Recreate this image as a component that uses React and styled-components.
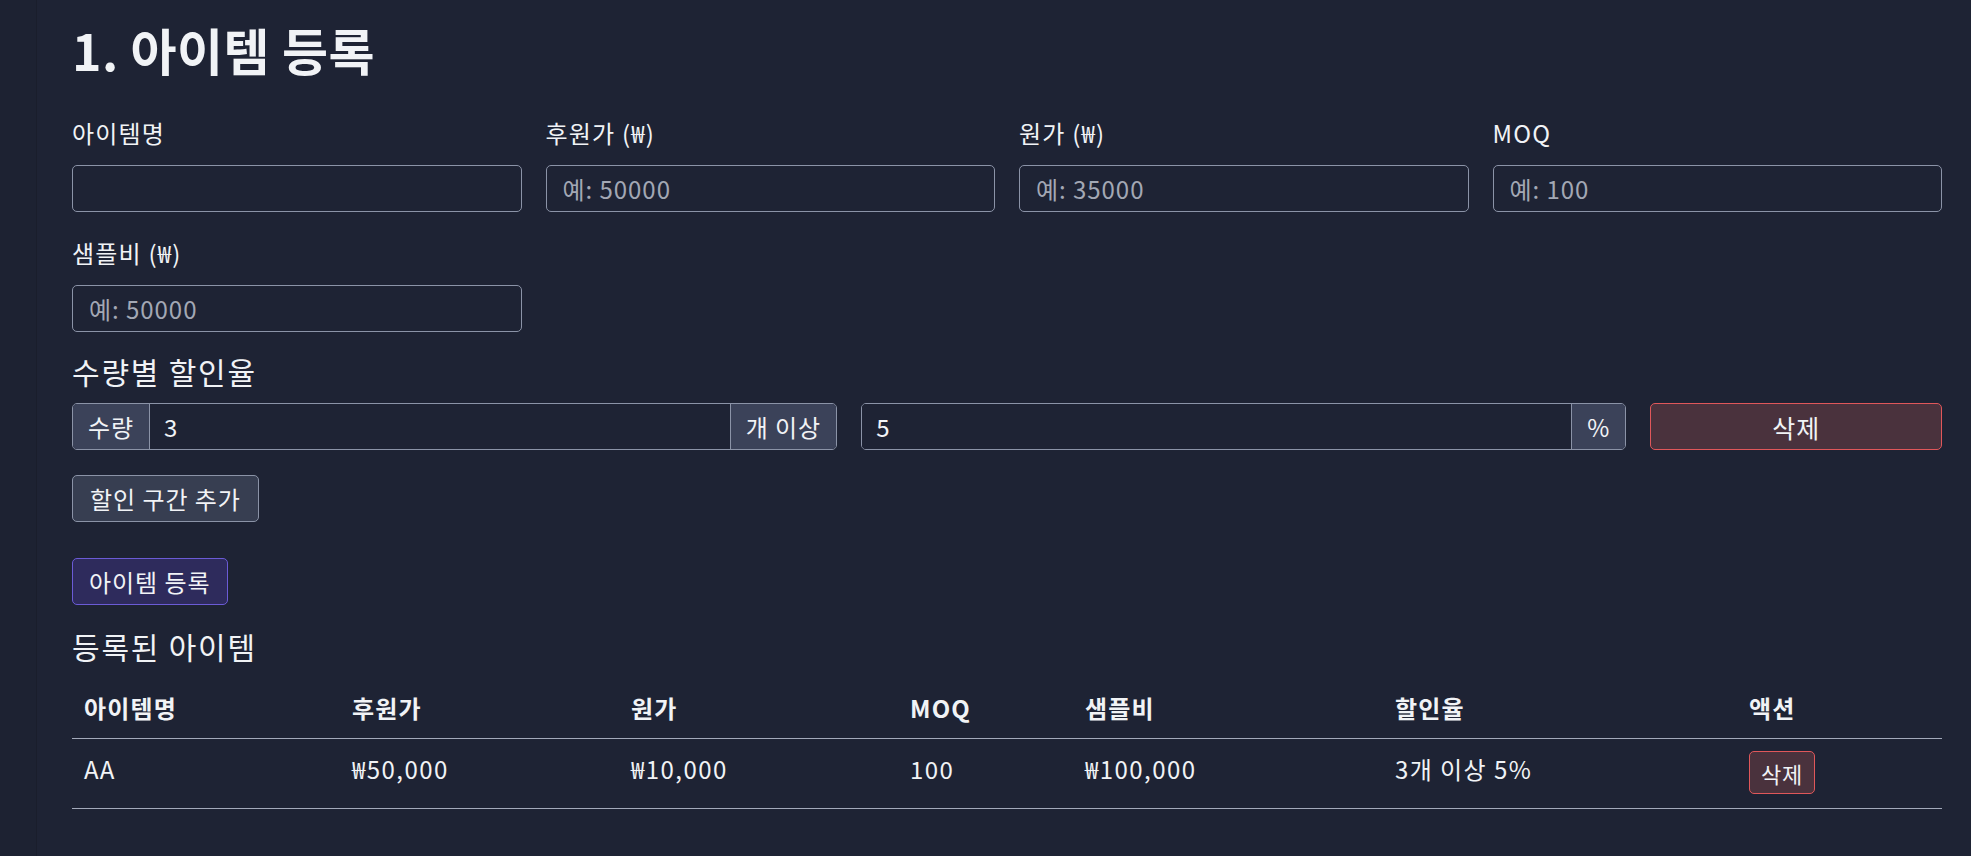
import React from "react";
import styled, { createGlobalStyle } from "styled-components";

const GlobalStyle = createGlobalStyle`
  html, body {
    margin: 0;
    padding: 0;
    background: #1d2232;
  }
  body {
    font-family: "Noto Sans CJK KR", "Noto Sans", sans-serif;
    color: #f1f3f6;
  }
  * { box-sizing: border-box; }
`;

const items = [
  {
    name: "AA",
    price: "₩50,000",
    cost: "₩10,000",
    moq: "100",
    sample: "₩100,000",
    discount: "3개 이상 5%",
  },
];

const columns = [
  { label: "아이템명", width: 268 },
  { label: "후원가", width: 279 },
  { label: "원가", width: 279 },
  { label: "MOQ", width: 175 },
  { label: "샘플비", width: 310 },
  { label: "할인율", width: 354 },
  { label: "액션", width: 205 },
];

function Field({ label, placeholder }) {
  return (
    <FieldBox>
      <Label>{label}</Label>
      <Input placeholder={placeholder} />
    </FieldBox>
  );
}

export default function App() {
  return (
    <>
      <GlobalStyle />
      <Page>
        <Title>1. 아이템 등록</Title>

        <FieldGrid>
          <Field label="아이템명" />
          <Field label="후원가 (₩)" placeholder="예: 50000" />
          <Field label="원가 (₩)" placeholder="예: 35000" />
          <Field label="MOQ" placeholder="예: 100" />
          <Field label="샘플비 (₩)" placeholder="예: 50000" />
        </FieldGrid>

        <SubTitle>수량별 할인율</SubTitle>
        <DiscountRow>
          <InputGroup>
            <Addon>수량</Addon>
            <GroupInput defaultValue="3" />
            <Addon>개 이상</Addon>
          </InputGroup>
          <InputGroup>
            <GroupInput defaultValue="5" />
            <Addon>%</Addon>
          </InputGroup>
          <DangerButton $wide>삭제</DangerButton>
        </DiscountRow>

        <Button>할인 구간 추가</Button>
        <PrimaryButton>아이템 등록</PrimaryButton>

        <SubTitle $tight>등록된 아이템</SubTitle>
        <Table>
          <thead>
            <tr>
              {columns.map((c) => (
                <Th key={c.label} $w={c.width}>
                  {c.label}
                </Th>
              ))}
            </tr>
          </thead>
          <tbody>
            {items.map((it) => (
              <tr key={it.name}>
                <Td>{it.name}</Td>
                <Td>{it.price}</Td>
                <Td>{it.cost}</Td>
                <Td>{it.moq}</Td>
                <Td>{it.sample}</Td>
                <Td>{it.discount}</Td>
                <Td>
                  <DangerButton $small>삭제</DangerButton>
                </Td>
              </tr>
            ))}
          </tbody>
        </Table>
      </Page>
    </>
  );
}

//styling:

const Page = styled.div`
  margin-left: 36px;
  min-height: 856px;
  background: #1e2334;
  border-left: 1px solid #1a1e2c;
  padding: 20px 29px 40px 35px;
  display: flex;
  flex-direction: column;
  align-items: flex-start;
`;

const Title = styled.h1`
  margin: 0 0 38px;
  font-size: 50px;
  line-height: 58px;
  font-weight: 700;
  letter-spacing: 0.5px;
`;

const FieldGrid = styled.div`
  width: 100%;
  display: grid;
  grid-template-columns: repeat(4, 1fr);
  column-gap: 24px;
  row-gap: 24px;
`;

const FieldBox = styled.div`
  display: flex;
  flex-direction: column;
`;

const Label = styled.label`
  font-size: 24px;
  line-height: 34px;
  letter-spacing: 0.05em;
  margin-bottom: 15px;
  color: #f1f3f6;
`;

const Input = styled.input`
  height: 47px;
  width: 100%;
  padding: 0 16px;
  font-family: inherit;
  font-size: 24px;
  letter-spacing: 0.04em;
  color: #f1f3f6;
  background: #1e2334;
  border: 1px solid #8b93a7;
  border-radius: 5px;
  outline: none;
  &::placeholder {
    color: #a3a8b4;
  }
`;

const SubTitle = styled.h3`
  margin: ${(p) => (p.$tight ? "24px" : "22px")} 0 14px;
  font-size: 30px;
  line-height: 35px;
  font-weight: 400;
  letter-spacing: 0.06em;
`;

const DiscountRow = styled.div`
  width: 100%;
  display: grid;
  grid-template-columns:
    calc((100% + 24px) * 5 / 12 - 24px)
    calc((100% + 24px) * 5 / 12 - 24px)
    1fr;
  column-gap: 24px;
  margin-bottom: 25px;
`;

const InputGroup = styled.div`
  display: flex;
  height: 47px;
  border: 1px solid #8b93a7;
  border-radius: 5px;
  overflow: hidden;
`;

const Addon = styled.span`
  display: flex;
  align-items: center;
  padding: 0 15px;
  font-size: 24px;
  letter-spacing: 0.04em;
  background: #3b4259;
  color: #f1f3f6;
  white-space: nowrap;
  &:first-child {
    border-right: 1px solid #8b93a7;
  }
  &:last-child {
    border-left: 1px solid #8b93a7;
  }
`;

const GroupInput = styled.input`
  flex: 1;
  min-width: 0;
  border: none;
  outline: none;
  padding: 0 14px;
  font-family: inherit;
  font-size: 24px;
  color: #f1f3f6;
  background: #1e2334;
`;

const Button = styled.button`
  height: 47px;
  padding: 0 17px;
  font-family: inherit;
  font-size: 24px;
  letter-spacing: 0.04em;
  color: #f1f3f6;
  background: #373e51;
  border: 1px solid #8b93a7;
  border-radius: 5px;
  cursor: pointer;
  margin-bottom: 36px;
`;

const PrimaryButton = styled(Button)`
  background: #2e2b5c;
  border-color: #6b5bd6;
  margin-bottom: 0;
  padding: 0 16px;
`;

const DangerButton = styled.button`
  font-family: inherit;
  color: #f1f3f6;
  background: #4a323d;
  border: 1px solid #e0575a;
  border-radius: 5px;
  cursor: pointer;
  letter-spacing: 0.04em;
  height: ${(p) => (p.$small ? "43px" : "47px")};
  padding: ${(p) => (p.$small ? "0 11px" : "0 14px")};
  font-size: ${(p) => (p.$small ? "22px" : "25px")};
  width: ${(p) => (p.$wide ? "100%" : "auto")};
`;

const Table = styled.table`
  width: 100%;
  border-collapse: collapse;
  table-layout: fixed;
`;

const Th = styled.th`
  width: ${(p) => p.$w}px;
  text-align: left;
  font-size: 24px;
  line-height: 36px;
  letter-spacing: 0.05em;
  font-weight: 700;
  padding: 12px;
  border-bottom: 1px solid #a3a9ba;
`;

const Td = styled.td`
  font-size: 24px;
  line-height: 36px;
  letter-spacing: 0.06em;
  padding: 12px 12px 14px;
  vertical-align: top;
  border-bottom: 1px solid #a3a9ba;
`;
